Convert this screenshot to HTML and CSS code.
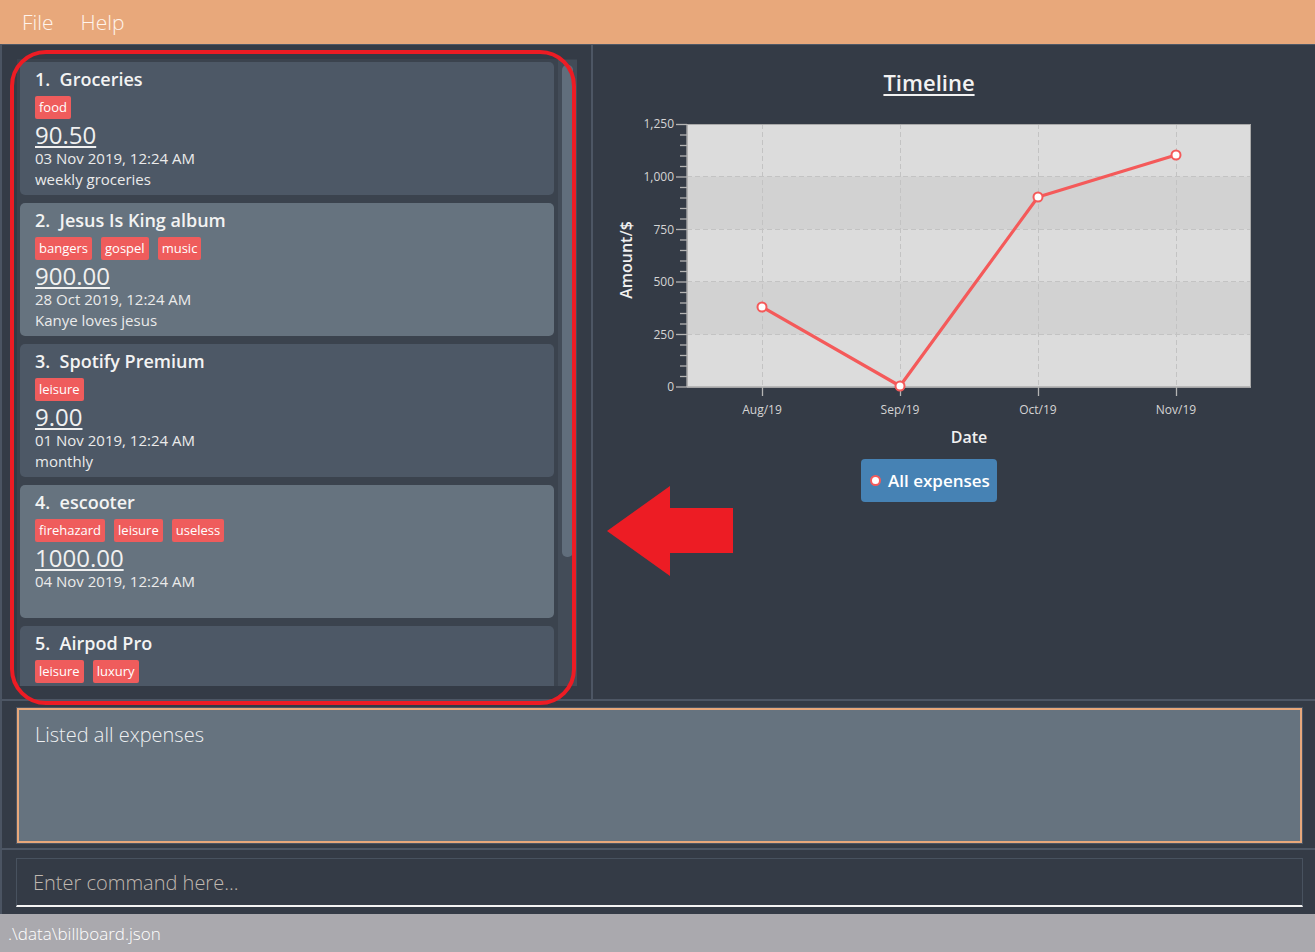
FILE: index.html
```html
<!DOCTYPE html>
<html lang="en">
<head>
<meta charset="utf-8">
<title>Billboard</title>
<link rel="stylesheet" href="styles.css">
</head>
<body>
<div class="app">
  <header class="menubar">
    <span class="menu-item">File</span>
    <span class="menu-item">Help</span>
  </header>

  <div class="main">
    <section class="left-pane">
      <div class="list">
        <div class="cards">
          <div class="card card-dark">
            <div class="card-title">1.&nbsp; Groceries</div>
            <div class="tags"><span class="tag">food</span></div>
            <div class="amount">90.50</div>
            <div class="meta">03 Nov 2019, 12:24 AM</div>
            <div class="meta">weekly groceries</div>
          </div>
          <div class="card card-light">
            <div class="card-title">2.&nbsp; Jesus Is King album</div>
            <div class="tags"><span class="tag">bangers</span><span class="tag">gospel</span><span class="tag">music</span></div>
            <div class="amount">900.00</div>
            <div class="meta">28 Oct 2019, 12:24 AM</div>
            <div class="meta">Kanye loves jesus</div>
          </div>
          <div class="card card-dark">
            <div class="card-title">3.&nbsp; Spotify Premium</div>
            <div class="tags"><span class="tag">leisure</span></div>
            <div class="amount">9.00</div>
            <div class="meta">01 Nov 2019, 12:24 AM</div>
            <div class="meta">monthly</div>
          </div>
          <div class="card card-light">
            <div class="card-title">4.&nbsp; escooter</div>
            <div class="tags"><span class="tag">firehazard</span><span class="tag">leisure</span><span class="tag">useless</span></div>
            <div class="amount">1000.00</div>
            <div class="meta">04 Nov 2019, 12:24 AM</div>
          </div>
          <div class="card card-dark">
            <div class="card-title">5.&nbsp; Airpod Pro</div>
            <div class="tags"><span class="tag">leisure</span><span class="tag">luxury</span></div>
          </div>
        </div>
        <div class="scrollbar"><div class="thumb"></div></div>
      </div>
    </section>

    <section class="right-pane">
      <h2 class="chart-title">Timeline</h2>
      <svg class="chart" width="675" height="340" viewBox="0 0 675 340">
        <rect x="94" y="14" width="564" height="263" fill="#dcdcdc"/>
        <rect x="94" y="66.6" width="564" height="52.6" fill="#d2d2d2"/>
        <rect x="94" y="171.8" width="564" height="52.6" fill="#d2d2d2"/>
        <g stroke="#c3c3c3" stroke-width="1" stroke-dasharray="5 3">
          <line x1="94" y1="66.5" x2="658" y2="66.5"/>
          <line x1="94" y1="119.5" x2="658" y2="119.5"/>
          <line x1="94" y1="171.5" x2="658" y2="171.5"/>
          <line x1="94" y1="224.5" x2="658" y2="224.5"/>
          <line x1="169.5" y1="14" x2="169.5" y2="277"/>
          <line x1="307.5" y1="14" x2="307.5" y2="277"/>
          <line x1="445.5" y1="14" x2="445.5" y2="277"/>
          <line x1="583.5" y1="14" x2="583.5" y2="277"/>
        </g>
        <rect x="94.5" y="14.5" width="563" height="262.5" fill="none" stroke="#a9a9a9" stroke-width="1"/>
        <g stroke="#b4b4b4" stroke-width="1.3">
          <line x1="94" y1="14" x2="94" y2="277"/>
          <line x1="94" y1="277" x2="658" y2="277"/>
          <line x1="83" y1="14.5" x2="94" y2="14.5"/>
          <line x1="83" y1="67" x2="94" y2="67"/>
          <line x1="83" y1="119.5" x2="94" y2="119.5"/>
          <line x1="83" y1="172" x2="94" y2="172"/>
          <line x1="83" y1="224.5" x2="94" y2="224.5"/>
          <line x1="83" y1="277" x2="94" y2="277"/>
          <line x1="87" y1="25" x2="94" y2="25"/><line x1="87" y1="35.5" x2="94" y2="35.5"/><line x1="87" y1="46" x2="94" y2="46"/><line x1="87" y1="56.5" x2="94" y2="56.5"/>
          <line x1="87" y1="77.5" x2="94" y2="77.5"/><line x1="87" y1="88" x2="94" y2="88"/><line x1="87" y1="98.5" x2="94" y2="98.5"/><line x1="87" y1="109" x2="94" y2="109"/>
          <line x1="87" y1="130" x2="94" y2="130"/><line x1="87" y1="140.5" x2="94" y2="140.5"/><line x1="87" y1="151" x2="94" y2="151"/><line x1="87" y1="161.5" x2="94" y2="161.5"/>
          <line x1="87" y1="182.5" x2="94" y2="182.5"/><line x1="87" y1="193" x2="94" y2="193"/><line x1="87" y1="203.5" x2="94" y2="203.5"/><line x1="87" y1="214" x2="94" y2="214"/>
          <line x1="87" y1="235" x2="94" y2="235"/><line x1="87" y1="245.5" x2="94" y2="245.5"/><line x1="87" y1="256" x2="94" y2="256"/><line x1="87" y1="266.5" x2="94" y2="266.5"/>
          <line x1="169.5" y1="277" x2="169.5" y2="286"/>
          <line x1="307.5" y1="277" x2="307.5" y2="286"/>
          <line x1="445.5" y1="277" x2="445.5" y2="286"/>
          <line x1="583.5" y1="277" x2="583.5" y2="286"/>
        </g>
        <g class="tick-label" text-anchor="end">
          <text x="81" y="18">1,250</text>
          <text x="81" y="71">1,000</text>
          <text x="81" y="123.5">750</text>
          <text x="81" y="176">500</text>
          <text x="81" y="228.5">250</text>
          <text x="81" y="281">0</text>
        </g>
        <g class="tick-label" text-anchor="middle">
          <text x="169" y="304">Aug/19</text>
          <text x="307" y="304">Sep/19</text>
          <text x="445" y="304">Oct/19</text>
          <text x="583" y="304">Nov/19</text>
        </g>
        <text class="axis-label" x="376" y="333" text-anchor="middle">Date</text>
        <text class="axis-label" x="0" y="0" text-anchor="middle" transform="translate(39 150) rotate(-90)">Amount/$</text>
        <polyline points="169,197 307,276 445,87 583,45" fill="none" stroke="#f45a5a" stroke-width="3.2" stroke-linejoin="round"/>
        <g fill="#ffffff" stroke="#f45a5a" stroke-width="2">
          <circle cx="169" cy="197" r="4.5"/>
          <circle cx="307" cy="276" r="4.5"/>
          <circle cx="445" cy="87" r="4.5"/>
          <circle cx="583" cy="45" r="4.5"/>
        </g>
      </svg>
      <div class="legend">
        <span class="legend-dot"></span>
        <span class="legend-text">All expenses</span>
      </div>
    </section>
  </div>

  <div class="result-area">
    <div class="result-box">Listed all expenses</div>
  </div>

  <div class="command-area">
    <div class="command-box">Enter command here...</div>
  </div>

  <footer class="statusbar">.\data\billboard.json</footer>

  <div class="annotation-box"></div>
  <svg class="annotation-arrow" width="140" height="100" viewBox="0 0 140 100">
    <polygon points="7,51 70,6 70,28 133,28 133,73 70,73 70,96" fill="#ed1c24"/>
  </svg>
</div>
</body>
</html>
```

FILE: styles.css
```css
* {
  box-sizing: border-box;
}

body {
  margin: 0;
  background: #343b46;
  font-family: "Open Sans", "Noto Sans", sans-serif;
  color: #f2f2f2;
}

.app {
  position: relative;
  width: 1315px;
  height: 952px;
  display: flex;
  flex-direction: column;
  overflow: hidden;
  background: #343b46;
}

/* menu bar */
.menubar {
  height: 44px;
  flex: none;
  background: #e8a87b;
  display: flex;
  align-items: center;
  gap: 27px;
  padding-left: 22px;
  padding-bottom: 1px;
}

.menu-item {
  font-size: 21px;
  font-weight: 300;
  color: #fff4ec;
}

/* main split */
.main {
  height: 657px;
  flex: none;
  display: flex;
  border-top: 1px solid #4f5866;
  border-bottom: 2px solid #4d5664;
  border-left: 2px solid #4b5462;
}

.left-pane {
  width: 591px;
  flex: none;
  border-right: 2px solid #4d5664;
  padding: 14px 14px 13px 15px;
}

.list {
  width: 560px;
  height: 627px;
  display: flex;
  background: #3b434e;
  padding: 3px 0 0 3px;
  overflow: hidden;
}

.cards {
  width: 534px;
  flex: none;
  display: flex;
  flex-direction: column;
  gap: 8px;
}

.card {
  height: 133px;
  flex: none;
  border-radius: 5px;
  padding: 5px 15px;
}

.card-dark {
  background: #4d5866;
}

.card-light {
  background: #66737f;
}

.card-title {
  font-size: 18px;
  font-weight: 600;
  line-height: 25px;
  color: #f3f3f3;
  white-space: pre;
}

.tags {
  display: flex;
  gap: 9px;
  margin-top: 4px;
  height: 23px;
}

.tag {
  background: #ef5c5c;
  color: #ffffff;
  font-size: 13px;
  line-height: 23px;
  padding: 0 4px;
  border-radius: 2px;
}

.amount {
  font-size: 24px;
  line-height: 27px;
  margin-top: 2px;
  color: #f0f0f0;
  text-decoration: underline;
  text-decoration-thickness: 1.5px;
  text-underline-offset: 2px;
}

.meta {
  font-size: 15px;
  line-height: 21px;
  color: #ebebeb;
}

.scrollbar {
  width: 19px;
  margin-left: 4px;
  margin-top: -2px;
  background: #434c58;
  padding: 5px 4px 0 4px;
  flex: none;
}

.thumb {
  width: 11px;
  height: 492px;
  background: #616e7c;
  border-radius: 5px;
}

/* right pane */
.right-pane {
  flex: 1;
  min-width: 0;
  display: flex;
  flex-direction: column;
  align-items: center;
  padding-right: 50px;
}

.chart-title {
  margin: 22px 0 0 0;
  font-size: 22px;
  line-height: 30px;
  font-weight: 600;
  color: #f2f2f2;
  text-decoration: underline;
  text-underline-offset: 3px;
  text-decoration-thickness: 2px;
}

.chart {
  display: block;
  flex: none;
  margin-top: 13px;
  align-self: flex-start;
}

.tick-label {
  font-size: 12px;
  fill: #d4d4d4;
}

.axis-label {
  font-size: 16px;
  font-weight: 600;
  fill: #f0f0f0;
}

.legend {
  margin-top: 9px;
  width: 136px;
  height: 43px;
  background: #4682b4;
  border-radius: 4px;
  display: flex;
  align-items: center;
  padding-left: 9px;
  gap: 7px;
}

.legend-dot {
  width: 11px;
  height: 11px;
  border-radius: 50%;
  background: #ffffff;
  border: 2px solid #f45a5a;
}

.legend-text {
  font-size: 17px;
  font-weight: 600;
  color: #ffffff;
}

/* result display */
.result-area {
  height: 149px;
  flex: none;
  padding: 7px 13px 0 15px;
  border-bottom: 2px solid #4d5664;
  border-left: 2px solid #4b5462;
}

.result-box {
  height: 135px;
  border: 2px solid #e8a87b;
  box-shadow: 0 0 0 1px #4d5664;
  background: #66737f;
  padding: 10px 0 0 16px;
  font-size: 20px;
  font-weight: 300;
  line-height: 30px;
  color: #eef0f2;
}

/* command box */
.command-area {
  height: 64px;
  flex: none;
  padding: 8px 12px 0 14px;
  border-left: 2px solid #4b5462;
}

.command-box {
  height: 49px;
  border: 1px solid #48525f;
  border-bottom: 2px solid #f4f4f4;
  padding: 10px 0 0 16px;
  font-size: 20px;
  font-weight: 300;
  line-height: 28px;
  color: #c0b8b0;
}

/* status bar */
.statusbar {
  height: 38px;
  flex: none;
  background: #aaa9ae;
  padding: 8px 0 0 8px;
  font-size: 17px;
  font-weight: 300;
  line-height: 24px;
  color: #ffffff;
}

/* annotations drawn over the screenshot */
.annotation-box {
  position: absolute;
  left: 10px;
  top: 50px;
  width: 566px;
  height: 655px;
  border: 4px solid #ed1c24;
  border-radius: 36px;
  pointer-events: none;
}

.annotation-arrow {
  position: absolute;
  left: 600px;
  top: 480px;
}
```
